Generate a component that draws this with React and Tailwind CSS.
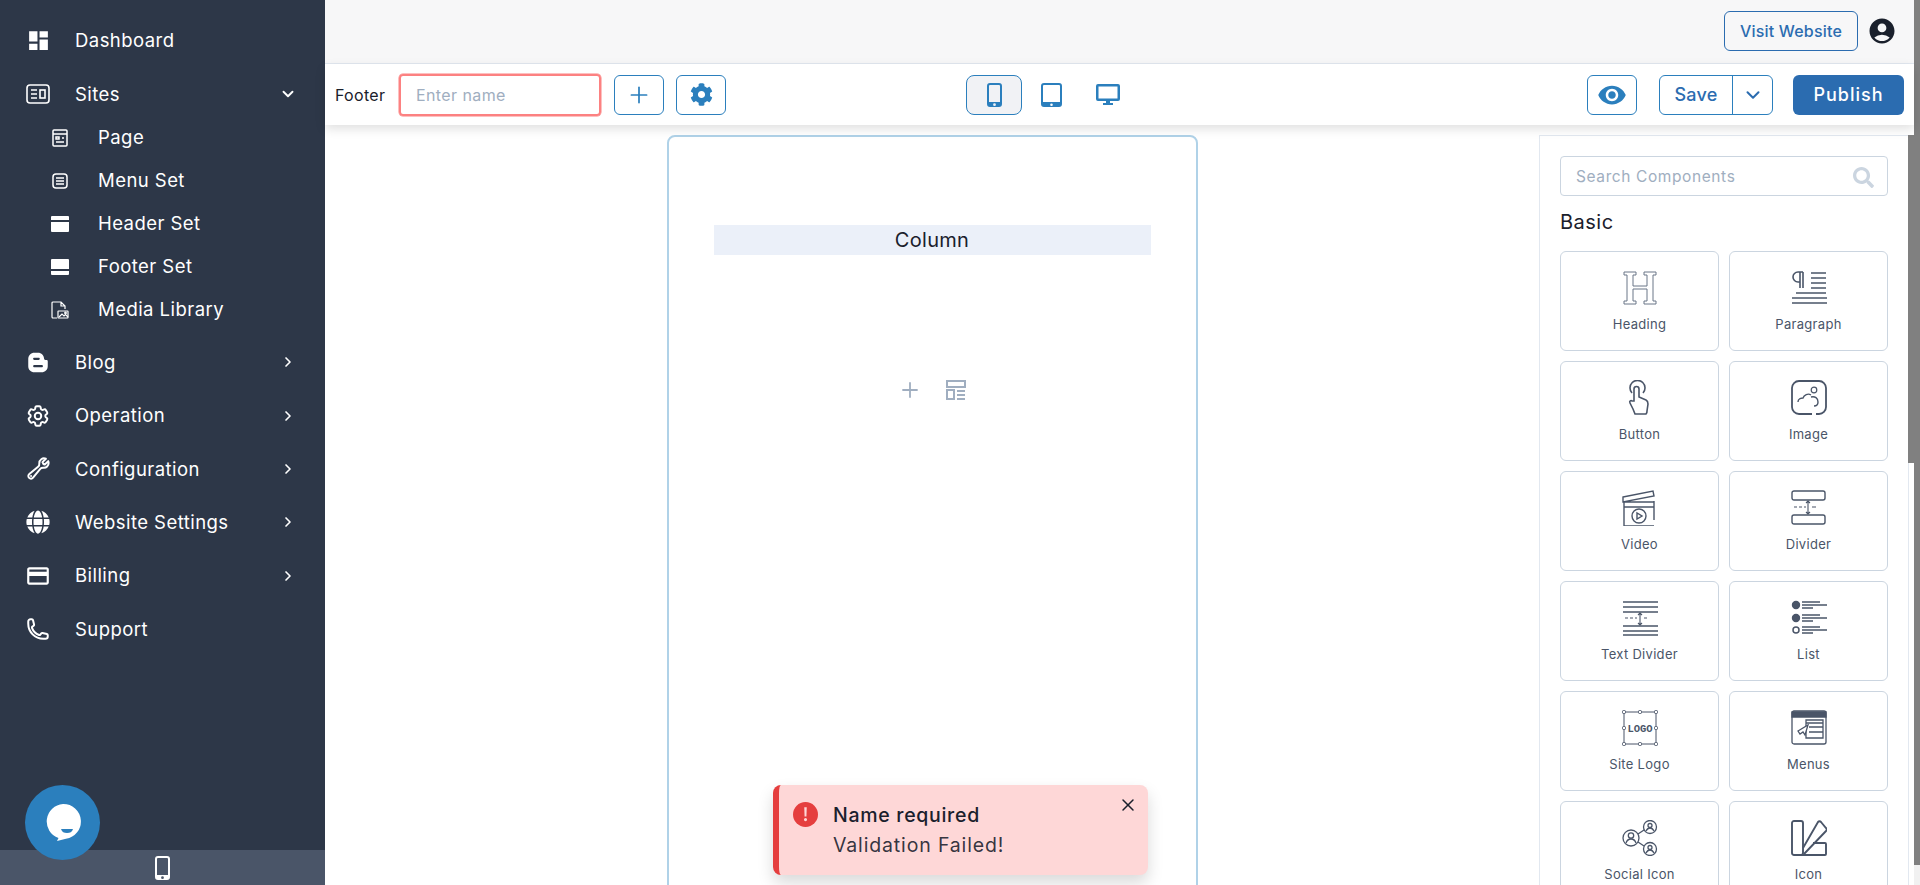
import React from "react";
import { MdDashboard, MdVisibility, MdAccountCircle, MdOutlineCreditCard } from "react-icons/md";
import { RiBloggerFill } from "react-icons/ri";
import { FaGlobe, FaCog, FaSearch } from "react-icons/fa";
import { HiOutlineCog6Tooth, HiOutlineWrench, HiOutlinePhone } from "react-icons/hi2";
import { LuChevronDown, LuChevronRight, LuPlus, LuX } from "react-icons/lu";

const S = ({ children, w = 36, h = 36, vb = "0 0 36 36", sw = 1.3, cls = "text-[#4a5568]" }) => (
  <svg width={w} height={h} viewBox={vb} fill="none" stroke="currentColor" strokeWidth={sw} className={cls}>{children}</svg>
);

const SitesIcon = () => (
  <svg width="24" height="20" viewBox="0 0 24 20" fill="none" stroke="currentColor" strokeWidth="1.6">
    <rect x="1" y="1" width="22" height="18" rx="3" />
    <path d="M5 6h6M5 10h6M5 14h6" /><rect x="14" y="6" width="5" height="8" />
  </svg>
);
const PageIcon = () => (
  <svg width="16" height="18" viewBox="0 0 16 18" fill="none" stroke="currentColor" strokeWidth="1.5">
    <rect x="1" y="1" width="14" height="16" rx="1" /><path d="M1 5h14M4 8h3v2H4zM10 9h2M4 13h8" />
  </svg>
);
const MenuSetIcon = () => (
  <svg width="16" height="16" viewBox="0 0 16 16" fill="none" stroke="currentColor" strokeWidth="1.5">
    <rect x="1" y="1" width="14" height="14" rx="3" /><path d="M4 5h8M4 8h8M4 11h8" />
  </svg>
);
const HeaderIcon = () => (
  <svg width="18" height="16" viewBox="0 0 18 16" fill="white">
    <path d="M0 1a1 1 0 0 1 1-1h16a1 1 0 0 1 1 1v3H0zM0 6h18v9a1 1 0 0 1-1 1H1a1 1 0 0 1-1-1z" />
  </svg>
);
const FooterIcon = () => (
  <svg width="18" height="16" viewBox="0 0 18 16" fill="white">
    <path d="M0 1a1 1 0 0 1 1-1h16a1 1 0 0 1 1 1v9H0zM0 12h18v3a1 1 0 0 1-1 1H1a1 1 0 0 1-1-1z" />
  </svg>
);
const MediaIcon = () => (
  <svg width="18" height="18" viewBox="0 0 18 18" fill="none" stroke="currentColor" strokeWidth="1.2">
    <path d="M6 17H2a1 1 0 0 1-1-1V2a1 1 0 0 1 1-1h8l4 4v3M10 1v4h4" />
    <rect x="7" y="10" width="10" height="7" rx="0.5" /><path d="M8 16l3-3 2 2 1.5-1.5L17 16" /><circle cx="14.5" cy="12" r="0.8" />
  </svg>
);

const Phone = ({ w = 15, h = 24, c = "currentColor" }) => (
  <svg width={w} height={h} viewBox="0 0 15 24">
    <path fillRule="evenodd" fill={c} d="M3 0h9a3 3 0 0 1 3 3v18a3 3 0 0 1-3 3H3a3 3 0 0 1-3-3V3a3 3 0 0 1 3-3zM2 3v16h11V3a1 1 0 0 0-1-1H3a1 1 0 0 0-1 1zm5.5 17.3a1.4 1.4 0 1 0 0 2.8 1.4 1.4 0 0 0 0-2.8z" />
  </svg>
);
const Tablet = () => (
  <svg width="21" height="24" viewBox="0 0 21 24">
    <path fillRule="evenodd" fill="#2b7fbd" d="M3 0h15a3 3 0 0 1 3 3v18a3 3 0 0 1-3 3H3a3 3 0 0 1-3-3V3a3 3 0 0 1 3-3zM2 3v16h17V3a1 1 0 0 0-1-1H3a1 1 0 0 0-1 1zm8.5 17.5a1.3 1.3 0 1 0 0 2.6 1.3 1.3 0 0 0 0-2.6z" />
  </svg>
);
const Desktop = () => (
  <svg width="24" height="22" viewBox="0 0 24 22">
    <path fillRule="evenodd" fill="#2b7fbd" d="M2 0h20a2 2 0 0 1 2 2v13a2 2 0 0 1-2 2h-8v2h3v2H7v-2h3v-2H2a2 2 0 0 1-2-2V2a2 2 0 0 1 2-2zm.5 2.5v12h19v-12z" />
  </svg>
);

const top = [
  { l: "Dashboard", i: <MdDashboard size={25} />, },
  { l: "Sites", i: <SitesIcon />, down: true },
];
const subs = [
  ["Page", <PageIcon />], ["Menu Set", <MenuSetIcon />], ["Header Set", <HeaderIcon />], ["Footer Set", <FooterIcon />], ["Media Library", <MediaIcon />],
];
const rest = [
  { l: "Blog", i: <RiBloggerFill size={27} />, r: true },
  { l: "Operation", i: <HiOutlineCog6Tooth size={28} strokeWidth={1.8} />, r: true },
  { l: "Configuration", i: <HiOutlineWrench size={25} strokeWidth={1.9} />, r: true },
  { l: "Website Settings", i: <FaGlobe size={24} />, r: true },
  { l: "Billing", i: <MdOutlineCreditCard size={26} />, r: true },
  { l: "Support", i: <HiOutlinePhone size={24} strokeWidth={2} /> },
];

const NavItem = ({ l, i, r, down }) => (
  <div className="flex items-center h-[53.33px] pl-[25px] pr-[27px] text-white">
    <span className="w-[26px] flex justify-center">{i}</span>
    <span className="ml-[24px] text-[18.5px] tracking-[0.45px] font-normal pt-[1px]">{l}</span>
    {r && <LuChevronRight size={16} strokeWidth={2.5} className="ml-auto mr-[2px]" />}
    {down && <LuChevronDown size={18} strokeWidth={2.5} className="ml-auto mr-[1px]" />}
  </div>
);

const HeadingI = () => (
  <S>
    <path d="M2 2h12v3h-3v11h14V5h-3V2h12v3h-3v26h3v3H22v-3h3V19H11v12h3v3H2v-3h3V5H2z" strokeWidth="1" stroke="#6b7688" />
  </S>
);
const ParaI = () => (
  <S>
    <path d="M12 2H7a5 5 0 0 0 0 10h2V2m3 0v16M9 2v16" strokeWidth="1.6" />
    <path d="M20 3h15M20 8h15M20 13h15M20 18h15M5 23h30M1 28h35M1 33h35" strokeWidth="1.5" />
  </S>
);
const ButtonI = () => (
  <S sw="1.6">
    <path d="M10 13a7.5 7.5 0 1 1 11 0" />
    <path d="M12 21V9a2.5 2.5 0 0 1 5 0v8l7 3c2 1 2 2 2 4l-1 7a4 4 0 0 1-1 3H13l-2-5-3-6c-1-2 1-3 2-2z" />
  </S>
);
const ImageI = () => (
  <S sw="1.8">
    <path d="M21 34H8a7 7 0 0 1-7-7V8a7 7 0 0 1 7-7h20a7 7 0 0 1 7 7v19a7 7 0 0 1-7 7h-3" />
    <circle cx="23" cy="10" r="2.8" strokeWidth="1.2" />
    <path d="M7 22c0-3 3-4 5-4 1-3 5-5 8-3M20 17c4-1 7 1 7 5 0 3-2 4-4 4" strokeWidth="1.4" />
  </S>
);
const VideoI = () => (
  <S sw="1.4">
    <path d="M1 7l30-6 1 5L1 12zM2 12v24h30M32 11v19M2 12h30M2 17h30" />
    <circle cx="17" cy="26" r="7" /><path d="M15 23v6l5-3z" />
  </S>
);
const DividerI = () => (
  <S sw="1.4">
    <rect x="1" y="1" width="33" height="9" rx="2" /><rect x="1" y="25" width="33" height="9" rx="2" />
    <path d="M3 17h12" strokeDasharray="3 2" strokeWidth="1.1" /><path d="M17 11v13M15 13l2-2 2 2M15 22l2 2 2-2M21 17h4" strokeWidth="1.1" />
  </S>
);
const TextDividerI = () => (
  <S sw="1.5">
    <path d="M1 2h35M1 7h35M1 12h35M1 26h35M1 31h35M1 35h35" />
    <path d="M3 18h12" strokeDasharray="3 2" strokeWidth="1.1" /><path d="M18 13v12M16 15l2-2 2 2M16 23l2 2 2-2M22 18h3" strokeWidth="1.1" />
  </S>
);
const ListI = () => (
  <S sw="1.4">
    <circle cx="5" cy="5" r="3.5" fill="currentColor" /><circle cx="5" cy="18" r="3.5" fill="currentColor" /><circle cx="5" cy="30" r="3" strokeWidth="1.5" />
    <path d="M11 2h18M11 5h25M11 8h11M11 15h18M11 18h25M11 21h11M11 27h18M11 30h25M11 33h11" />
  </S>
);
const LogoI = () => (
  <S sw="1">
    <path d="M3 2h30M2 3v30M3 34h30M34 3v30" />
    {[[2,2],[18,2],[34,2],[2,18],[34,18],[2,34],[18,34],[34,34]].map(([x,y],k)=>(<rect key={k} x={x-1.5} y={y-1.5} width="3" height="3" rx="1" fill="white" />))}
    <text x="18" y="22" textAnchor="middle" fontSize="10.5" fontWeight="700" fontFamily="'Liberation Mono', monospace" fill="currentColor" stroke="none">LOGO</text>
  </S>
);
const MenusI = () => (
  <S sw="1.3">
    <rect x="1" y="1" width="34" height="33" rx="2" />
    <path d="M1 2h34v5H1z" fill="currentColor" />
    <path d="M15 10h17v18H15zM15 13h17M18 17h14M18 22h14" />
    <path d="M7 21l10-6-3 10-2-3-3 2z" fill="white" />
  </S>
);
const SocialI = () => (
  <S sw="1.3">
    <circle cx="9" cy="18" r="8" /><circle cx="28" cy="7" r="6.5" /><circle cx="28" cy="29" r="6.5" />
    <path d="M16 14l6-4M16 22l6 4" />
    <circle cx="9" cy="15.5" r="2.7" /><path d="M4 23c1-3 3-4 5-4s4 1 5 4" />
    <circle cx="28" cy="5.5" r="2" /><path d="M24 11c1-2 2-3 4-3s3 1 4 3" />
    <circle cx="28" cy="27.5" r="2" /><path d="M24 33c1-2 2-3 4-3s3 1 4 3" />
  </S>
);
const IconI = () => (
  <S sw="1.9">
    <rect x="1" y="1" width="11" height="34" rx="2" />
    <path d="M12 28L27 2a2 2 0 0 1 3 0l5 6a2 2 0 0 1 0 3L13 34" />
    <path d="M22 23h12a1 1 0 0 1 1 1v10a1 1 0 0 1-1 1H10" />
  </S>
);

const cards = [
  ["Heading", <HeadingI />], ["Paragraph", <ParaI />], ["Button", <ButtonI />], ["Image", <ImageI />],
  ["Video", <VideoI />], ["Divider", <DividerI />], ["Text Divider", <TextDividerI />], ["List", <ListI />],
  ["Site Logo", <LogoI />], ["Menus", <MenusI />], ["Social Icon", <SocialI />], ["Icon", <IconI />],
];

const outlineBtn = "flex items-center justify-center h-[40px] border border-[#2b7fbd] rounded-md bg-white text-[#2b7fbd]";

export default function App() {
  return (
    <div className="relative flex w-full h-[885px] overflow-hidden bg-white font-['Inter','Noto_Sans',sans-serif] text-[#1a202c]">
      {/* Sidebar */}
      <aside className="relative w-[325px] shrink-0 flex flex-col bg-[#2d3748] pt-[14px]">
        {top.map((t) => <NavItem key={t.l} {...t} />)}
        <div className="-mt-1 mb-1">
          {subs.map(([l, i]) => (
            <div key={l} className="flex items-center h-[43px] pl-[50px] text-white">
              <span className="w-[20px] flex justify-center">{i}</span>
              <span className="ml-[28px] text-[18.5px] tracking-[0.45px]">{l}</span>
            </div>
          ))}
        </div>
        {rest.map((t) => <NavItem key={t.l} {...t} />)}
        <div className="mt-auto h-[35px] bg-[#4a5568] flex items-center justify-center text-white">
          <Phone />
        </div>
      </aside>

      {/* Main */}
      <main className="flex-1 min-w-0 flex flex-col pr-[6px]">
        <header className="h-[64px] shrink-0 flex items-center justify-end bg-[#f7f7f8] border-b border-[#e2e8f0] pr-[17px] pb-[2px]">
          <button className="h-[40px] w-[134px] rounded-md border border-[#2b6cb0] text-[#2b6cb0] text-[16px] font-medium tracking-[0.2px]">Visit Website</button>
          <MdAccountCircle size={30} className="ml-[9px] text-[#1a202c]" />
        </header>
        <div className="relative z-10 h-[61px] shrink-0 flex items-center bg-white shadow-[0_4px_10px_rgba(0,0,0,0.12)] pl-[10px] pr-[10px]">
          <span className="w-[64px] text-[16px] tracking-[0.3px] text-[#1a202c]">Footer</span>
          <input placeholder="Enter name" className="w-[202px] h-[42px] border-2 border-[#fc8181] shadow-[0_0_0_0.5px_#fc8181] rounded-[4px] pl-[15px] text-[16px] tracking-[0.4px] outline-none placeholder:text-[#a0aec0]" />
          <button className={`${outlineBtn} w-[50px] ml-[13px]`}><LuPlus size={26} strokeWidth={1.6} /></button>
          <button className={`${outlineBtn} w-[50px] ml-[12px]`}><FaCog size={23} /></button>
          <div className="ml-[240px] flex items-center">
            <button className="flex items-center justify-center w-[56px] h-[40px] rounded-lg border border-[#2b7fbd] bg-[#f1f2f5]"><Phone c="#2b7fbd" /></button>
            <span className="w-[21px] ml-[19px] flex justify-center"><Tablet /></span>
            <span className="w-[24px] ml-[34px] flex justify-center"><Desktop /></span>
          </div>
          <button className={`${outlineBtn} w-[50px] ml-auto`}><MdVisibility size={30} /></button>
          <div className="ml-[22px] flex h-[40px] w-[114px] border border-[#2b7fbd] rounded-md text-[#2b6cb0]">
            <span className="w-[73px] flex items-center justify-center border-r border-[#2b7fbd] text-[18px] font-medium tracking-[0.2px]">Save</span>
            <span className="flex-1 flex items-center justify-center"><LuChevronDown size={22} strokeWidth={2.2} /></span>
          </div>
          <button className="ml-[20px] w-[111px] h-[40px] rounded-md bg-[#2b6cb0] text-white text-[18px] font-medium tracking-[1px]">Publish</button>
        </div>

        <div className="flex-1 min-h-0 flex overflow-hidden">
          <div className="flex-1 flex justify-center pt-[10px] overflow-hidden">
            <div className="w-[531px] h-[800px] shrink-0 rounded-lg border-2 border-[#b0d2e8] px-[45px] pt-[88px]">
              <div className="h-[30px] bg-[#ebf0f9] flex items-center justify-center text-[20px] tracking-[0.3px] text-[#1a202c]">Column</div>
              <div className="mt-[123px] flex justify-center items-center gap-[24px] text-[#a0aec0]">
                <LuPlus size={24} strokeWidth={1.8} />
                <svg width="20" height="20" viewBox="0 0 20 20" fill="none" stroke="#a0aec0" strokeWidth="2">
                  <path d="M1 1h18v6H1zM1 10h7v9H1zM11 11h8M11 15h8M11 19h8" />
                </svg>
              </div>
            </div>
          </div>

          <aside className="w-[375px] shrink-0 mt-[10px] border-l border-t border-[#e2e8f0] pl-[20px] pt-[20px]">
            <div className="relative h-[40px] w-[328px] flex items-center border border-[#cbd5e0] rounded-[4px] pl-[15px] pt-[1px] text-[15.5px] tracking-[0.6px] text-[#a0aec0]">
              Search Components
              <FaSearch size={21} className="absolute right-[13px] top-[10px] text-[#cbd5e0]" />
            </div>
            <div className="mt-[13px] text-[20px] leading-[26px] tracking-[0.5px] text-[#1a202c]">Basic</div>
            <div className="mt-[16px] grid grid-cols-[159px_159px] gap-[10px] auto-rows-[100px]">
              {cards.map(([l, i]) => (
                <div key={l} className="flex flex-col items-center border border-[#cbd5e0] rounded-md pt-[18px]">
                  <div className="h-[36px]">{i}</div>
                  <div className="mt-[9px] text-[13px] tracking-[0.3px] text-[#4a5568]">{l}</div>
                </div>
              ))}
            </div>
          </aside>
        </div>
      </main>

      {/* Scrollbars */}
      <div className="absolute right-0 top-0 h-full w-[6px] bg-[#f1f1f1]" />
      <div className="absolute right-0 top-0 h-[865px] w-[6px] bg-[#808080]" />
      <div className="absolute right-[6px] top-[135px] bottom-0 w-[6px] border-l border-[#e2e8f0]" />
      <div className="absolute right-[6px] top-[135px] h-[328px] w-[6px] bg-[#808080]" />

      {/* Chat launcher */}
      <div className="absolute left-[25px] top-[785px] w-[75px] h-[75px] rounded-full bg-[#2b7fbd] flex items-center justify-center">
        <svg width="36" height="40" viewBox="0 0 36 40">
          <path fill="white" d="M18 1a17.5 17.5 0 0 1 3 34.8L12 38l1.5-3A17.5 17.5 0 0 1 18 1z" />
          <path fill="#2b7fbd" d="M16 26h12c-1 3-3 4-6 4s-5-1-6-4z" />
        </svg>
      </div>

      {/* Toast */}
      <div className="absolute left-[773px] top-[785px] w-[375px] h-[90px] rounded-lg bg-[#fed7d7] border-l-[6px] border-[#e53e3e] shadow-[0_8px_16px_rgba(0,0,0,0.15)] flex pl-[14px] pt-[17px]">
        <svg width="25" height="25" viewBox="0 0 24 24" className="shrink-0">
          <circle cx="12" cy="12" r="12" fill="#e53e3e" />
          <path d="M10.8 5h2.4l-.3 9h-1.8zM12 15.4a1.5 1.5 0 1 1 0 3 1.5 1.5 0 0 1 0-3z" fill="#fed7d7" />
        </svg>
        <div className="ml-[15px]">
          <div className="text-[19.5px] leading-[26px] font-medium tracking-[0.7px] text-[#1a202c]">Name required</div>
          <div className="mt-[4px] text-[19.5px] leading-[26px] tracking-[0.85px] text-[#1a202c]/90">Validation Failed!</div>
        </div>
        <LuX size={20} strokeWidth={1.8} className="absolute right-[10px] top-[10px] text-[#1a202c]" />
      </div>
    </div>
  );
}
